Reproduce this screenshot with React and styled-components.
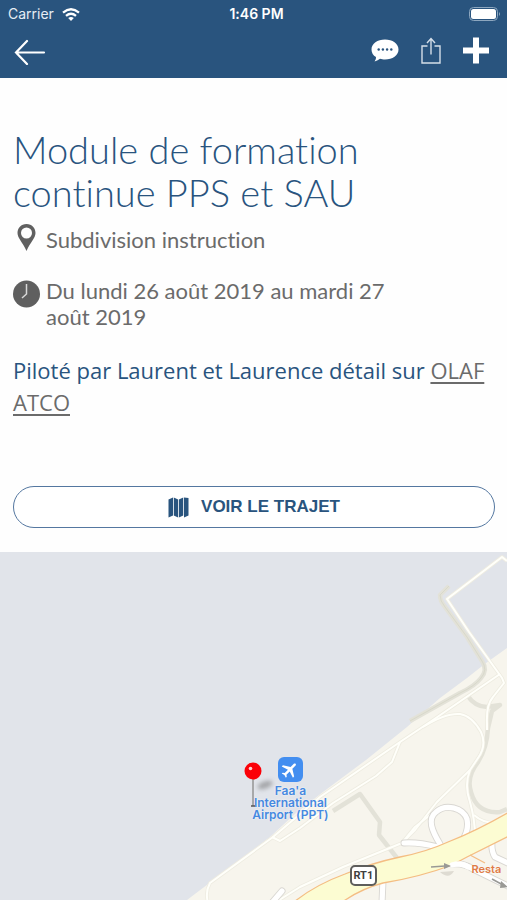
import styled, { createGlobalStyle } from 'styled-components';
import { MdFlight } from 'react-icons/md';

const NAVY = '#29547e';
const GRAY = '#6b6b6b';

const GlobalStyle = createGlobalStyle`
  * {
    box-sizing: border-box;
  }

  body {
    margin: 0;
    background: #fefefe;
    font-family: Lato, 'Liberation Sans', sans-serif;
    font-variant-ligatures: none;
  }
`;

const Page = styled.div`
  min-height: 100vh;
  overflow: hidden;
`;

const Header = styled.header`
  background: ${NAVY};
  color: #ffffff;
`;

const StatusBar = styled.div`
  display: grid;
  grid-template-columns: 1fr auto 1fr;
  align-items: center;
  height: 28px;
  padding: 0 6px 0 8px;
  font-family: Inter, 'Liberation Sans', sans-serif;
  font-size: 14px;
  line-height: 20px;
`;

const Carrier = styled.span`
  display: flex;
  align-items: center;
  gap: 8px;
  color: #e6edf4;
`;

const Time = styled.span`
  padding-left: 4px;
  font-weight: 600;
`;

const BatteryIcon = styled.svg`
  justify-self: end;
`;

const NavBar = styled.nav`
  display: flex;
  align-items: center;
  justify-content: space-between;
  height: 50px;
  padding: 0 17px 4px 12px;
`;

const Actions = styled.div`
  display: flex;
  align-items: center;
  gap: 18px;
`;

const IconButton = styled.button`
  display: flex;
  align-items: center;
  justify-content: center;
  padding: 0;
  border: 0;
  background: none;
  color: inherit;
  cursor: pointer;
`;

const Content = styled.main`
  padding: 50px 12px 24px 13px;
`;

const Title = styled.h1`
  max-width: 400px;
  margin: 0;
  color: ${NAVY};
  font-size: 38px;
  font-weight: 300;
  line-height: 43px;
`;

const Detail = styled.div`
  display: flex;
  align-items: flex-start;
  gap: 6px;
  max-width: 400px;
  margin-top: ${({ $gap }) => $gap}px;
  color: ${GRAY};
  font-size: 22px;
  line-height: ${({ $line }) => $line}px;

  svg {
    flex-shrink: 0;
  }
`;

const Description = styled.p`
  margin: 24px 0 68px;
  color: ${NAVY};
  font-family: 'Open Sans', 'Noto Sans', sans-serif;
  font-size: 22px;
  line-height: 32px;

  a {
    color: ${GRAY};
    text-underline-offset: 3px;
  }
`;

const RouteButton = styled.button`
  display: flex;
  align-items: center;
  justify-content: center;
  gap: 12px;
  width: 100%;
  height: 42px;
  border: 1px solid #5477a0;
  border-radius: 21px;
  background: #ffffff;
  color: ${NAVY};
  font-family: 'Liberation Sans', Arial, sans-serif;
  font-size: 17px;
  font-weight: 700;
  cursor: pointer;
`;

const Map = styled.section`
  position: relative;
  font-family: Inter, 'Liberation Sans', sans-serif;
`;

const MapCanvas = styled.svg`
  display: block;
  width: 100%;
  height: auto;
`;

const Place = styled.div`
  position: absolute;
  top: 59%;
  left: 49%;
  width: 84px;
  display: flex;
  flex-direction: column;
  align-items: center;
  gap: 3px;
  color: #4689e0;
  font-size: 12px;
  font-weight: 600;
  line-height: 12px;
  text-align: center;
  text-shadow: 0 0 2px #ffffff;

  span {
    display: block;
  }
`;

const PlaceIcon = styled.div`
  display: flex;
  align-items: center;
  justify-content: center;
  width: 25px;
  height: 25px;
  border-radius: 6px;
  background: #438ef0;
  color: #ffffff;

  svg {
    transform: rotate(45deg);
  }
`;

const Pin = styled.svg`
  position: absolute;
  top: 60%;
  left: 48%;
`;

const RoadBadge = styled.span`
  position: absolute;
  top: 90%;
  left: 69%;
  width: 27px;
  border: 2px solid #5e5e5c;
  border-radius: 5px;
  background: #ffffff;
  color: #3f3f3f;
  font-family: Roboto, 'Liberation Sans', sans-serif;
  font-size: 11px;
  font-weight: 700;
  line-height: 17px;
  text-align: center;
`;

const Poi = styled.span`
  position: absolute;
  top: 89%;
  left: 93%;
  color: #e07b45;
  font-size: 11px;
  font-weight: 600;
  line-height: 14px;
  text-shadow: 0 0 2px #ffffff;
`;

const TRACKS = [
  'M449 586L440 595Q440 601 445 607L467 637L482 661Q488 670 481 678Q475 686 460 693L410 721',
  'M467 695Q475 707 487 707L500 705L492 711L488 728Q487 748 478 762Q466 777 471 792Q477 814 500 812L507 809',
  'M333 811L360 794L380 822L379 835L397 858',
];

const LANES = [
  'M507 561L502 557L447 599L469 632L502 678L504 683L493 697Q486 705 487 724V730',
  'M500 674L433 720L400 742L320 797L273 837L210 883Q205 892 208 903',
  'M400 742L392 762L376 776L333 803L300 828L280 841L272 837',
  'M423 727Q445 713 460 714Q472 716 481 732Q487 745 478 758L470 770L437 802L415 830L402 843',
  'M470 770Q464 785 470 802Q475 820 475 836',
  'M474 815Q484 824 499 823',
  'M402 843L343 867L300 887L276 902',
  'M434 812L415 827L402 843',
];

const RAMPS = [
  'M404 843Q418 842 438 847',
  'M440 844C432 831 427 819 436 812C446 803 463 808 467 819Q469 828 464 838',
  'M492 840Q491 851 495 857L510 864',
  'M452 864Q464 863 473 869L510 887',
  'M383 880L382 903',
  'M282 891L270 905',
];

function MapDrawing() {
  return (
    <MapCanvas viewBox="0 552 507 348" aria-hidden="true">
      <rect y="552" width="507" height="348" fill="#e1e4ea" />
      <path
        d="M507 648L486 663L467 678L440 698L407 727L366 760L323 792L296 813L270 837L220 875L187 900H507Z"
        fill="#f7f5ed"
      />
      <g fill="none" strokeLinejoin="round">
        {TRACKS.map((d) => (
          <path key={d} d={d} stroke="#e3e2d8" strokeWidth="4.5" />
        ))}
        <path d={TRACKS[0]} stroke="#d9d9cb" strokeWidth="1" />
        {LANES.map((d) => (
          <path key={d} d={d} stroke="#eeece1" strokeWidth="3.6" />
        ))}
        {LANES.map((d) => (
          <path key={`${d}-fill`} d={d} stroke="#fffffa" strokeWidth="2" />
        ))}
        {RAMPS.map((d) => (
          <path key={d} d={d} stroke="#d9d7d2" strokeWidth="7" strokeLinecap="round" />
        ))}
        {RAMPS.map((d) => (
          <path key={`${d}-fill`} d={d} stroke="#ffffff" strokeWidth="5.2" strokeLinecap="round" />
        ))}
      </g>
      <path d="M440 872Q449 880 454 871Z" fill="#dedbd2" />
      <path
        d="M294 902Q315 885 345 874Q372 863 400 857Q426 852 448 842Q478 830 509 812V836L467 857L452 865Q420 877 383 883Q360 889 341 903Z"
        fill="#fcfcd2"
        stroke="#f4bd83"
        strokeWidth="1.3"
      />
      <path d="M452 865Q462 862 468 867" fill="none" stroke="#ffffff" strokeWidth="5" strokeLinecap="round" />
      <path d="M470 855L485 863" stroke="#f4bd83" strokeWidth="1.3" />
      <g stroke="#999995" strokeWidth="1.5" fill="#999995">
        <path d="M431 867L445 866" />
        <path d="M444 863L451 866L444 869Z" strokeWidth="0" />
        <path d="M492 879L503 885" />
        <path d="M501 881L508 887L500 888Z" strokeWidth="0" />
      </g>
    </MapCanvas>
  );
}

export default function App() {
  return (
    <Page>
      <GlobalStyle />
      <Header>
        <StatusBar>
          <Carrier>
            Carrier
            <svg width="18" height="13" viewBox="0 0 18 13" fill="none" stroke="#fff" strokeWidth="2.3">
              <path d="M1 4.6Q9 -2 17 4.6" />
              <path d="M4 7.8Q9 3.6 14 7.8" />
              <path d="M6.2 10Q9 7.8 11.8 10L9 13Z" fill="#fff" stroke="none" />
            </svg>
          </Carrier>
          <Time>1:46 PM</Time>
          <BatteryIcon width="32" height="15" viewBox="0 0 32 15">
            <rect x="0.5" y="0.5" width="28" height="13" rx="4" fill="none" stroke="#8da7bf" />
            <rect x="2" y="2" width="25" height="10" rx="2.5" fill="#fff" />
            <path d="M30 5Q32 7 30 9Z" fill="#8da7bf" />
          </BatteryIcon>
        </StatusBar>
        <NavBar>
          <IconButton aria-label="Retour">
            <svg width="34" height="28" viewBox="0 0 34 28" fill="none" stroke="#fff" strokeWidth="2.2" strokeLinecap="round">
              <path d="M15 4L4 15.500L15 27M4 15.500H32" />
            </svg>
          </IconButton>
          <Actions>
            <IconButton aria-label="Commentaires">
              <svg width="30" height="26" viewBox="0 0 30 26">
                <path
                  d="M15 1.500C22.500 1.500 28.500 5.500 28.500 11.500C28.500 17.500 22.500 21.500 15 21.500C13 21.500 11.500 21.200 10 20.800Q8 22.500 4.600 23.400Q6.300 21.500 6 19C3.200 17.500 1.500 14.800 1.500 11.500C1.500 5.500 7.500 1.500 15 1.500Z"
                  fill="#fff"
                />
                <g fill={NAVY}>
                  <circle cx="8.700" cy="11.500" r="1.200" />
                  <circle cx="12.900" cy="11.500" r="1.200" />
                  <circle cx="17.100" cy="11.500" r="1.200" />
                  <circle cx="21.300" cy="11.500" r="1.200" />
                </g>
              </svg>
            </IconButton>
            <IconButton aria-label="Partager">
              <svg width="26" height="28" viewBox="0 0 26 28" fill="none" stroke="#d5dfe9" strokeWidth="1.4">
                <path d="M9.500 9H4V26H22V9H16.500M13 17.500V2M9 6L13 1.500L17 6" />
              </svg>
            </IconButton>
            <IconButton aria-label="Ajouter">
              <svg width="28" height="28" viewBox="0 0 28 28" fill="none" stroke="#fff" strokeWidth="6">
                <path d="M14 0.500V26.500M1 13.500H27" />
              </svg>
            </IconButton>
          </Actions>
        </NavBar>
      </Header>

      <Content>
        <Title>Module de formation continue PPS et SAU</Title>
        <Detail $gap={10} $line={32}>
          <svg width="27" height="28" viewBox="0 0 27 28">
            <path
              d="M13.500 0C8 0 4.500 4 4.500 9C4.500 14 9.500 18 13.500 27C17.500 18 22.500 14 22.500 9C22.500 4 19 0 13.500 0ZM13.500 3.500A5.500 5.500 0 1 1 13.500 14.500A5.500 5.500 0 1 1 13.500 3.500Z"
              fill="#606060"
              fillRule="evenodd"
            />
          </svg>
          <span>Subdivision instruction</span>
        </Detail>
        <Detail $gap={22} $line={26}>
          <svg width="27" height="30" viewBox="0 0 27 30">
            <circle cx="13.500" cy="16" r="13.500" fill="#5f5f5f" />
            <path d="M13.500 6V16L9 20" fill="none" stroke="#d8d8d8" strokeWidth="1.500" />
          </svg>
          <span>Du lundi 26 août 2019 au mardi 27 août 2019</span>
        </Detail>
        <Description>
          Piloté par Laurent et Laurence détail sur <a href="#olaf">OLAF ATCO</a>
        </Description>
        <RouteButton>
          <svg width="21" height="21" viewBox="0 0 21 21" fill={NAVY}>
            <path d="M0.500 2.500L5 0.500V18.500L0.500 20.500ZM5.800 0.500L10.100 2.500V20.500L5.800 18.500ZM10.900 2.500L15.200 0.500V18.500L10.900 20.500ZM16 0.500L20.500 1V18.500L16 20.500Z" />
          </svg>
          VOIR LE TRAJET
        </RouteButton>
      </Content>

      <Map aria-label="Carte">
        <MapDrawing />
        <Place>
          <PlaceIcon>
            <MdFlight size={20} />
          </PlaceIcon>
          <div>
            <span>Faa'a</span>
            <span>International</span>
            <span>Airport (PPT)</span>
          </div>
        </Place>
        <Pin width="36" height="48" viewBox="0 0 36 48">
          <defs>
            <filter id="pin-shadow" x="-50%" y="-100%" width="200%" height="300%">
              <feGaussianBlur stdDeviation="2" />
            </filter>
          </defs>
          <ellipse cx="22" cy="24" rx="8" ry="3.500" transform="rotate(-20 22 24)" fill="#666" opacity="0.5" filter="url(#pin-shadow)" />
          <path d="M10 17V45" stroke="#999" strokeWidth="1.600" />
          <path d="M8 45H12" stroke="#555" strokeWidth="1.500" />
          <circle cx="10" cy="10" r="8.500" fill="#fb0007" />
          <circle cx="7.500" cy="7.500" r="1.800" fill="#ffd0d0" />
        </Pin>
        <RoadBadge>RT1</RoadBadge>
        <Poi>Resta</Poi>
      </Map>
    </Page>
  );
}
